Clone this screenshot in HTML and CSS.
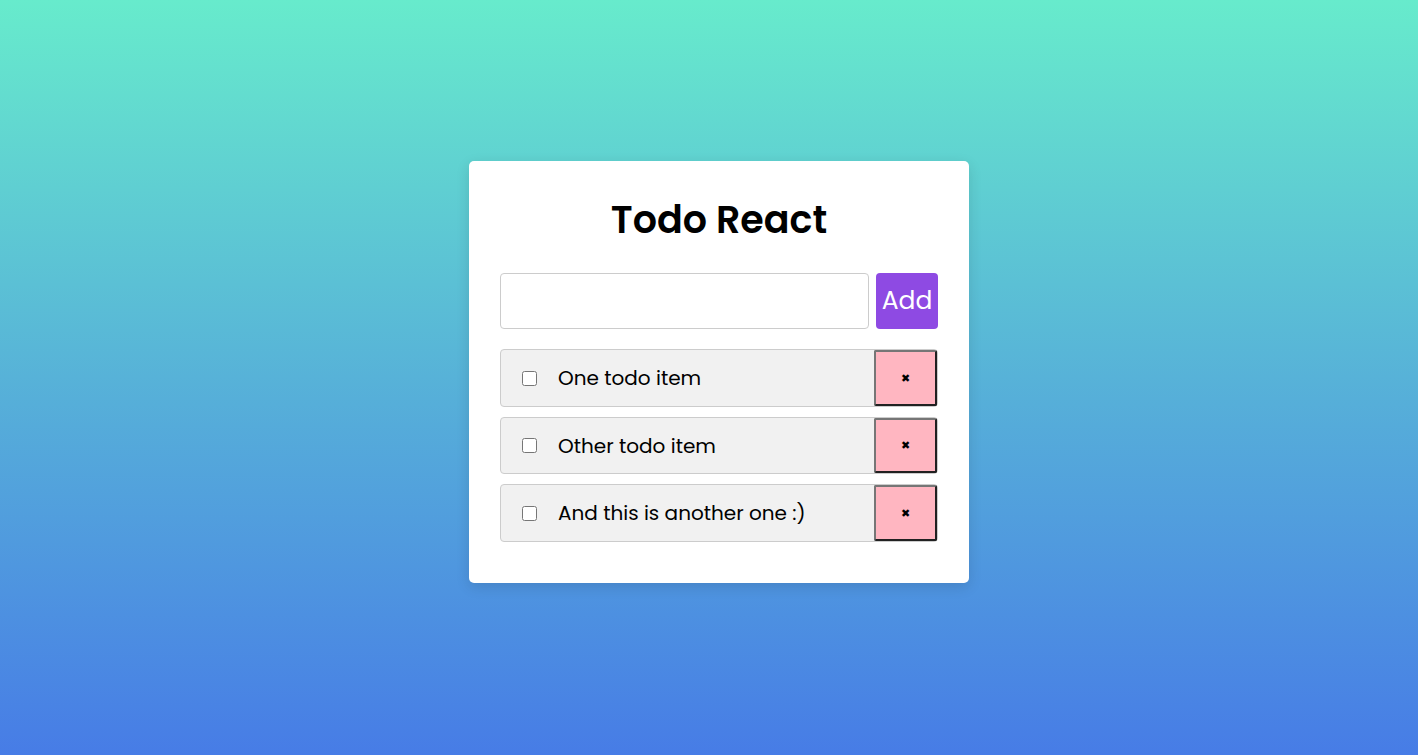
FILE: index.html
```html
<!DOCTYPE html>
<html lang="en">
<head>
<meta charset="utf-8">
<title>Todo React</title>
<link rel="stylesheet" href="styles.css">
</head>
<body>
<main class="card">
  <h1 class="title">Todo React</h1>
  <form class="add-form">
    <input class="add-input" type="text">
    <button class="add-btn" type="button">Add</button>
  </form>
  <ul class="list">
    <li class="item"><input class="check" type="checkbox"><span class="label">One todo item</span><button class="del" type="button">✖</button></li>
    <li class="item"><input class="check" type="checkbox"><span class="label">Other todo item</span><button class="del" type="button">✖</button></li>
    <li class="item"><input class="check" type="checkbox"><span class="label">And this is another one :)</span><button class="del" type="button">✖</button></li>
  </ul>
</main>
</body>
</html>
```
FILE: styles.css
```css
html, body {
  height: 100%;
}
body {
  margin: 0;
  box-sizing: border-box;
  padding: 0 0 11px 20px;
  display: flex;
  align-items: center;
  justify-content: center;
  background: linear-gradient(to bottom, #67ebcc 0%, #57b2d8 50%, #477ce6 100%);
  font-family: "Poppins", "Inter", "Open Sans", sans-serif;
}
.card {
  width: 500px;
  box-sizing: border-box;
  background: #fff;
  border-radius: 5px;
  padding: 37px 31px 31px;
  box-shadow: 0 4px 14px rgba(0, 0, 0, 0.12);
}
.title {
  margin: 0 0 31px;
  text-align: center;
  font-size: 38px;
  line-height: 44px;
  font-weight: 600;
  color: #000;
}
.add-form {
  display: flex;
  gap: 7px;
  margin: 0 0 20px;
}
.add-input {
  flex: 1 1 auto;
  min-width: 0;
  height: 56px;
  box-sizing: border-box;
  border: 1px solid #ccc;
  border-radius: 4px;
  padding: 0 10px;
  font-size: 20px;
  font-family: inherit;
}
.add-btn {
  flex: 0 0 62px;
  height: 56px;
  border: none;
  border-radius: 4px;
  background: #8e4ae3;
  color: #fff;
  font-family: inherit;
  font-size: 25px;
  padding: 0;
}
.list {
  list-style: none;
  margin: 0;
  padding: 0;
}
.item {
  display: flex;
  align-items: center;
  height: 57.5px;
  box-sizing: border-box;
  margin-bottom: 10px;
  background: #f1f1f1;
  border: 1px solid #ccc;
  border-radius: 4px;
  padding-left: 17px;
}
.check {
  margin: 3px 3px 3px 4px;
  width: 15px;
  height: 15px;
}
.label {
  flex: 1;
  margin-left: 18px;
  font-size: 20px;
  color: #000;
}
.del {
  align-self: stretch;
  width: 63px;
  background: #ffb6c1;
  border: 2px outset #767676;
  border-radius: 2px;
  font-family: "DejaVu Sans", sans-serif;
  font-size: 11px;
  color: #000;
  padding: 0;
}
```
